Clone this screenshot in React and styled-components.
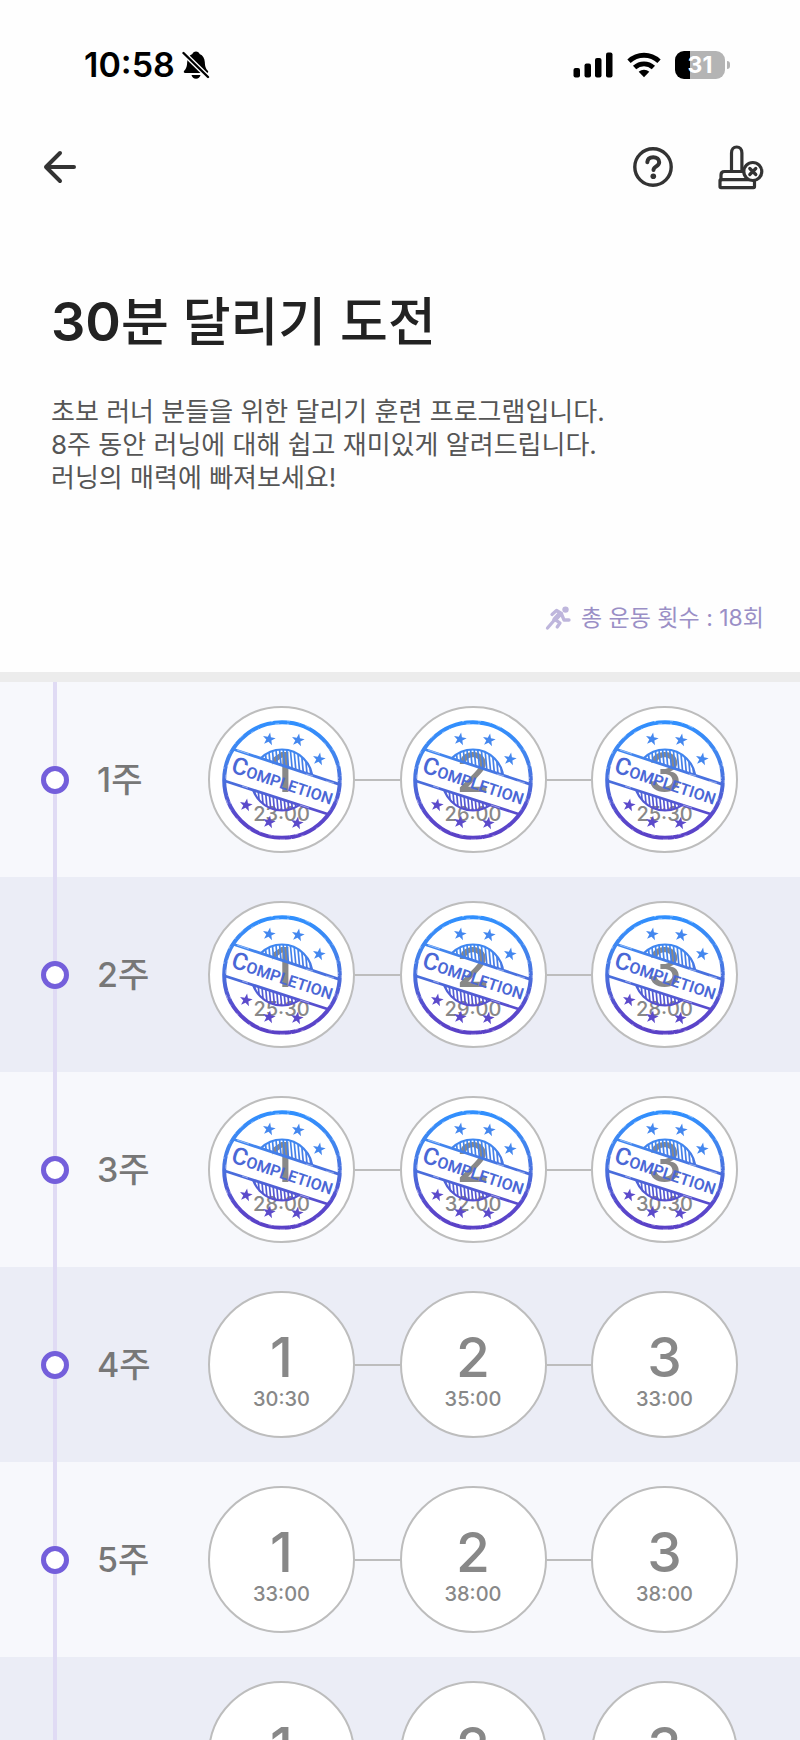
import styled, { createGlobalStyle } from "styled-components";

const GlobalStyle = createGlobalStyle`
  * {
    box-sizing: border-box;
  }
  body {
    margin: 0;
    background: #fefefe;
    font-family: Inter, "Noto Sans CJK KR", sans-serif;
    -webkit-font-smoothing: antialiased;
  }
  button {
    padding: 0;
    border: 0;
    background: none;
    font-family: inherit;
    cursor: pointer;
  }
`;

const Screen = styled.div`
  display: flex;
  flex-direction: column;
  height: 100vh;
  overflow: hidden;
`;

const StatusBar = styled.div`
  display: flex;
  align-items: center;
  justify-content: space-between;
  padding: 45px 70px 0 84px;
  height: 85px;
  flex: none;
`;

const StatusGroup = styled.div`
  display: flex;
  align-items: center;
  gap: ${({ $gap }) => $gap}px;
`;

const Clock = styled.span`
  font-size: 34px;
  font-weight: 600;
  line-height: 40px;
  color: #000;
`;

const Battery = styled.div`
  display: flex;
  align-items: center;
  gap: 2px;
  &::after {
    content: "";
    width: 3px;
    height: 8px;
    border-radius: 0 4px 4px 0;
    background: #b4b4b4;
  }
`;

const BatteryBody = styled.div`
  width: 50px;
  height: 28px;
  border-radius: 9px;
  background: linear-gradient(to right, #000 31%, #b4b4b4 31%);
  color: #fff;
  font-size: 23px;
  font-weight: 700;
  line-height: 28px;
  text-align: center;
`;

const Toolbar = styled.header`
  display: flex;
  align-items: center;
  justify-content: space-between;
  padding: 0 36px;
  height: 164px;
  flex: none;
`;

const ToolbarActions = styled.div`
  display: flex;
  align-items: center;
  gap: 44px;
`;

const IconButton = styled.button`
  display: flex;
  color: #333;
`;

const Intro = styled.section`
  display: flex;
  flex-direction: column;
  flex: none;
  padding: 41px 36px 38px 51px;
  border-bottom: 10px solid #ececec;
`;

const Title = styled.h1`
  margin: 0;
  font-size: 52px;
  font-weight: 500;
  line-height: 64px;
  color: #222;
`;

const TitleNumber = styled.span`
  font-size: 54px;
  font-weight: 600;
`;

const Description = styled.p`
  margin: 40px 0 0;
  font-size: 26px;
  line-height: 33px;
  color: #555;
`;

const Total = styled.p`
  display: flex;
  align-items: center;
  align-self: flex-end;
  gap: 10px;
  margin: 108px 0 0;
  font-size: 23px;
  line-height: 32px;
  color: #9a8fc6;
`;

const WeekList = styled.ol`
  flex: 1;
  min-height: 0;
  margin: 0;
  padding: 0;
  overflow-y: auto;
  scrollbar-width: none;
  list-style: none;
`;

const WeekRow = styled.li`
  display: flex;
  align-items: center;
  height: 195px;
  padding: 0 62px 0 41px;
  background: #f7f8fc;
  &:nth-child(even) {
    background: #ebedf6;
  }
`;

const Rail = styled.div`
  display: flex;
  align-items: center;
  align-self: stretch;
  width: 28px;
  background: linear-gradient(#e0dbf4, #e0dbf4) center / 4px 100% no-repeat;
`;

const Dot = styled.span`
  width: 28px;
  height: 28px;
  border: 5px solid #745fdb;
  border-radius: 50%;
  background: #fff;
`;

const WeekLabel = styled.h2`
  width: 111px;
  margin: 0 0 0 28px;
  font-size: 34px;
  font-weight: 500;
  line-height: 44px;
  color: #777;
`;

const Sessions = styled.div`
  display: flex;
  align-items: center;
  flex: 1;
`;

const Connector = styled.span`
  flex: 1;
  height: 2px;
  background: #bdbdbd;
`;

const SessionButton = styled.button`
  display: grid;
  place-items: center;
  width: 147px;
  height: 147px;
  border: 2px solid #bdbdbd;
  border-radius: 50%;
  background: #fff;
  color: #888;
  > * {
    grid-area: 1 / 1;
  }
`;

const SessionText = styled.span`
  display: flex;
  flex-direction: column;
  align-items: center;
  padding-top: 8px;
`;

const SessionNumber = styled.span`
  font-size: 55px;
  font-weight: 500;
  line-height: 60px;
`;

const SessionTime = styled.span`
  font-size: 20px;
  font-weight: 500;
  line-height: 24px;
`;

const weeks = [
  { week: 1, done: true, times: ["23:00", "26:00", "25:30"] },
  { week: 2, done: true, times: ["25:30", "29:00", "28:00"] },
  { week: 3, done: true, times: ["28:00", "32:00", "30:30"] },
  { week: 4, done: false, times: ["30:30", "35:00", "33:00"] },
  { week: 5, done: false, times: ["33:00", "38:00", "38:00"] },
  { week: 6, done: false, times: ["35:00", "40:00", "40:00"] },
];

const BellOffIcon = () => (
  <svg width="28" height="30" viewBox="0 0 28 30" aria-hidden="true">
    <path
      d="M14 1.500c1.800 0 3.200 1 3.600 2.400 3.400 1.300 5 4.400 5.200 8 .2 4.600 1 6.600 3 8.800.9 1 .4 2.300-1 2.300H3.200c-1.400 0-1.900-1.300-1-2.300 2-2.200 2.800-4.200 3-8.800.2-3.600 1.800-6.700 5.200-8C10.800 2.500 12.200 1.500 14 1.500z"
      fill="#000"
    />
    <path d="M9.500 25h9c-.5 2.300-2.200 3.700-4.500 3.700S10 27.300 9.500 25z" fill="#000" />
    <path d="M1.500 3l24.500 24" stroke="#fefefe" strokeWidth="5" />
    <path d="M1.500 3l24.500 24" stroke="#000" strokeWidth="2.400" strokeLinecap="round" />
  </svg>
);

const SignalIcon = () => (
  <svg width="40" height="26" viewBox="0 0 40 26" aria-hidden="true">
    <rect x="0.500" y="16" width="6.500" height="9.500" rx="2" />
    <rect x="11.500" y="11.500" width="6.500" height="14" rx="2" />
    <rect x="22" y="6" width="6.500" height="19.500" rx="2" />
    <rect x="33" y="0.500" width="6.500" height="25" rx="2" />
  </svg>
);

const WifiIcon = () => (
  <svg width="34" height="26" viewBox="0 0 34 26" aria-hidden="true">
    <g fill="none" stroke="#000" strokeWidth="4.800">
      <path d="M2 9.300C10.500 1.200 23.500 1.200 32 9.300" />
      <path d="M7.600 15.600c5.400-5 13.400-5 18.800 0" />
    </g>
    <path d="M11.700 19.800c3-2.700 7.600-2.700 10.600 0L17 25.300z" />
  </svg>
);

const BackIcon = () => (
  <svg width="48" height="48" viewBox="0 0 48 48" fill="none" aria-hidden="true">
    <path
      d="M38 24H10M24 10L10 24l14 14"
      stroke="currentColor"
      strokeWidth="4"
      strokeLinecap="round"
      strokeLinejoin="round"
    />
  </svg>
);

const HelpIcon = () => (
  <svg width="42" height="42" viewBox="0 0 42 42" fill="none" aria-hidden="true">
    <circle cx="21" cy="21" r="18.200" stroke="currentColor" strokeWidth="3.400" />
    <path
      d="M15.300 16.200c.3-3.200 2.600-5 5.900-5 3.500 0 6 2 6 5 0 4.200-5.700 4-5.700 7.800"
      stroke="currentColor"
      strokeWidth="4"
      strokeLinecap="round"
    />
    <circle cx="21.300" cy="30.300" r="2.800" fill="currentColor" />
  </svg>
);

const StampIcon = () => (
  <svg width="46" height="46" viewBox="0 0 46 46" fill="none" aria-hidden="true">
    <g stroke="currentColor" strokeWidth="3.200" strokeLinejoin="round" strokeLinecap="round">
      <path d="M13.500 27.500V9c0-3.600 2.200-6 5.200-6s5.200 2.400 5.200 6v18" />
      <path d="M26 27.500H6.500C4 27.500 3 28.800 3 31v5" />
      <rect x="2" y="35.600" width="34.500" height="8" rx="1" />
      <circle cx="34.800" cy="27.500" r="9" fill="#fefefe" />
      <path d="M31.800 24.500l6 6M37.800 24.500l-6 6" />
    </g>
  </svg>
);

const RunnerIcon = () => (
  <svg width="26" height="26" viewBox="0 0 26 26" fill="none" aria-hidden="true">
    <circle cx="20.500" cy="4.600" r="3.200" fill="#beb6dc" />
    <g stroke="#beb6dc" strokeWidth="3.300" strokeLinecap="round" strokeLinejoin="round">
      <path d="M7 9.500l4.500-4 5 3-6 6.300 4.500 3.200-2.800 4" />
      <path d="M16.500 9l2.500 6h5" />
      <path d="M9 15.500l-6.500 7.500" />
      <path d="M14.500 9l-5 5.500" strokeWidth="4.500" />
    </g>
  </svg>
);

const stars = [
  [47, 19],
  [76, 20],
  [97, 39],
  [24, 85],
  [47, 102],
  [75, 103],
];
const hatches = Array.from({ length: 19 }, (_, i) => 28 + i * 3.6);
const STAR = "M0-6.500L1.600-2 6.400-1.900 2.600 1 4 5.600 0 2.900-4 5.600-2.600 1-6.400-1.900-1.600-2z";

const CompletionStamp = ({ id }) => (
  <svg width="120" height="120" viewBox="0 0 120 120" fill="none" role="img" aria-label="Completion">
    <defs>
      <linearGradient id={`${id}-ink`} gradientUnits="userSpaceOnUse" x1="0" y1="0" x2="0" y2="120">
        <stop offset="0" stopColor="#2f90ff" />
        <stop offset="0.3" stopColor="#4285ee" />
        <stop offset="0.55" stopColor="#4a6ada" />
        <stop offset="0.8" stopColor="#5a48cc" />
        <stop offset="1" stopColor="#5a40c6" />
      </linearGradient>
      <clipPath id={`${id}-above`}>
        <path d="M0-10h130v78.600L0 25z" />
      </clipPath>
      <clipPath id={`${id}-below`}>
        <path d="M0 60.500l130 41V130H0z" />
      </clipPath>
      <clipPath id={`${id}-seal`}>
        <circle cx="60" cy="60" r="30.500" />
      </clipPath>
    </defs>
    <g stroke={`url(#${id}-ink)`}>
      <circle cx="60" cy="60" r="57.800" strokeWidth="4" />
      <path d="M10.500 29l107 35.300M3 61l104 33.500" strokeWidth="2.800" />
      {["above", "below"].map((side) => (
        <g key={side} clipPath={`url(#${id}-${side})`}>
          <circle cx="60" cy="60" r="30.500" strokeWidth="2.200" />
          <g clipPath={`url(#${id}-seal)`}>
            {hatches.map((x) => (
              <path key={x} d={`M${x - 3} 28l6 64`} strokeWidth="1.700" />
            ))}
          </g>
        </g>
      ))}
    </g>
    {stars.map(([x, y]) => (
      <path
        key={x + y}
        d={STAR}
        fill={y < 50 ? "#4387ef" : "#5b4acb"}
        transform={`translate(${x} ${y}) rotate(10)`}
      />
    ))}
    <text
      transform="translate(8 52) rotate(18)"
      fill="#4a67d6"
      fontFamily="Roboto, sans-serif"
      fontWeight="600"
      fontSize="16"
    >
      <tspan fontSize="24" fontWeight="500">C</tspan>OMPLETION
    </text>
    {/* worn ink flecks */}
    <g stroke="#fff" strokeOpacity="0.5" strokeWidth="0.8">
      <circle cx="60" cy="60" r="59.300" strokeDasharray="3 9 1 6 5 31 2 14" />
      <circle cx="60" cy="60" r="56.300" strokeDasharray="1 17 4 8 2 40 3 5" />
      <path d="M15 30l12 4M84 54l7 2M104 61l8 2M20 66l6 2M78 85l9 3" />
    </g>
  </svg>
);

const Session = ({ week, number, time, done }) => (
  <SessionButton type="button">
    <SessionText>
      <SessionNumber>{number}</SessionNumber>
      <SessionTime>{time}</SessionTime>
    </SessionText>
    {done && <CompletionStamp id={`stamp-${week}-${number}`} />}
  </SessionButton>
);

const Week = ({ week, times, done }) => (
  <WeekRow>
    <Rail>
      <Dot />
    </Rail>
    <WeekLabel>{week}주</WeekLabel>
    <Sessions>
      <Session week={week} number={1} time={times[0]} done={done} />
      <Connector />
      <Session week={week} number={2} time={times[1]} done={done} />
      <Connector />
      <Session week={week} number={3} time={times[2]} done={done} />
    </Sessions>
  </WeekRow>
);

const App = () => {
  return (
    <>
      <GlobalStyle />
      <Screen>
        <StatusBar>
          <StatusGroup $gap={7}>
            <Clock>10:58</Clock>
            <BellOffIcon />
          </StatusGroup>
          <StatusGroup $gap={14}>
            <SignalIcon />
            <WifiIcon />
            <Battery>
              <BatteryBody>31</BatteryBody>
            </Battery>
          </StatusGroup>
        </StatusBar>
        <Toolbar>
          <IconButton type="button" aria-label="뒤로">
            <BackIcon />
          </IconButton>
          <ToolbarActions>
            <IconButton type="button" aria-label="도움말">
              <HelpIcon />
            </IconButton>
            <IconButton type="button" aria-label="도장 초기화">
              <StampIcon />
            </IconButton>
          </ToolbarActions>
        </Toolbar>
        <Intro>
          <Title>
            <TitleNumber>30</TitleNumber>분 달리기 도전
          </Title>
          <Description>
            초보 러너 분들을 위한 달리기 훈련 프로그램입니다.
            <br />
            8주 동안 러닝에 대해 쉽고 재미있게 알려드립니다.
            <br />
            러닝의 매력에 빠져보세요!
          </Description>
          <Total>
            <RunnerIcon />총 운동 횟수 : 18회
          </Total>
        </Intro>
        <WeekList>
          {weeks.map((item) => (
            <Week key={item.week} {...item} />
          ))}
        </WeekList>
      </Screen>
    </>
  );
};

export default App;
